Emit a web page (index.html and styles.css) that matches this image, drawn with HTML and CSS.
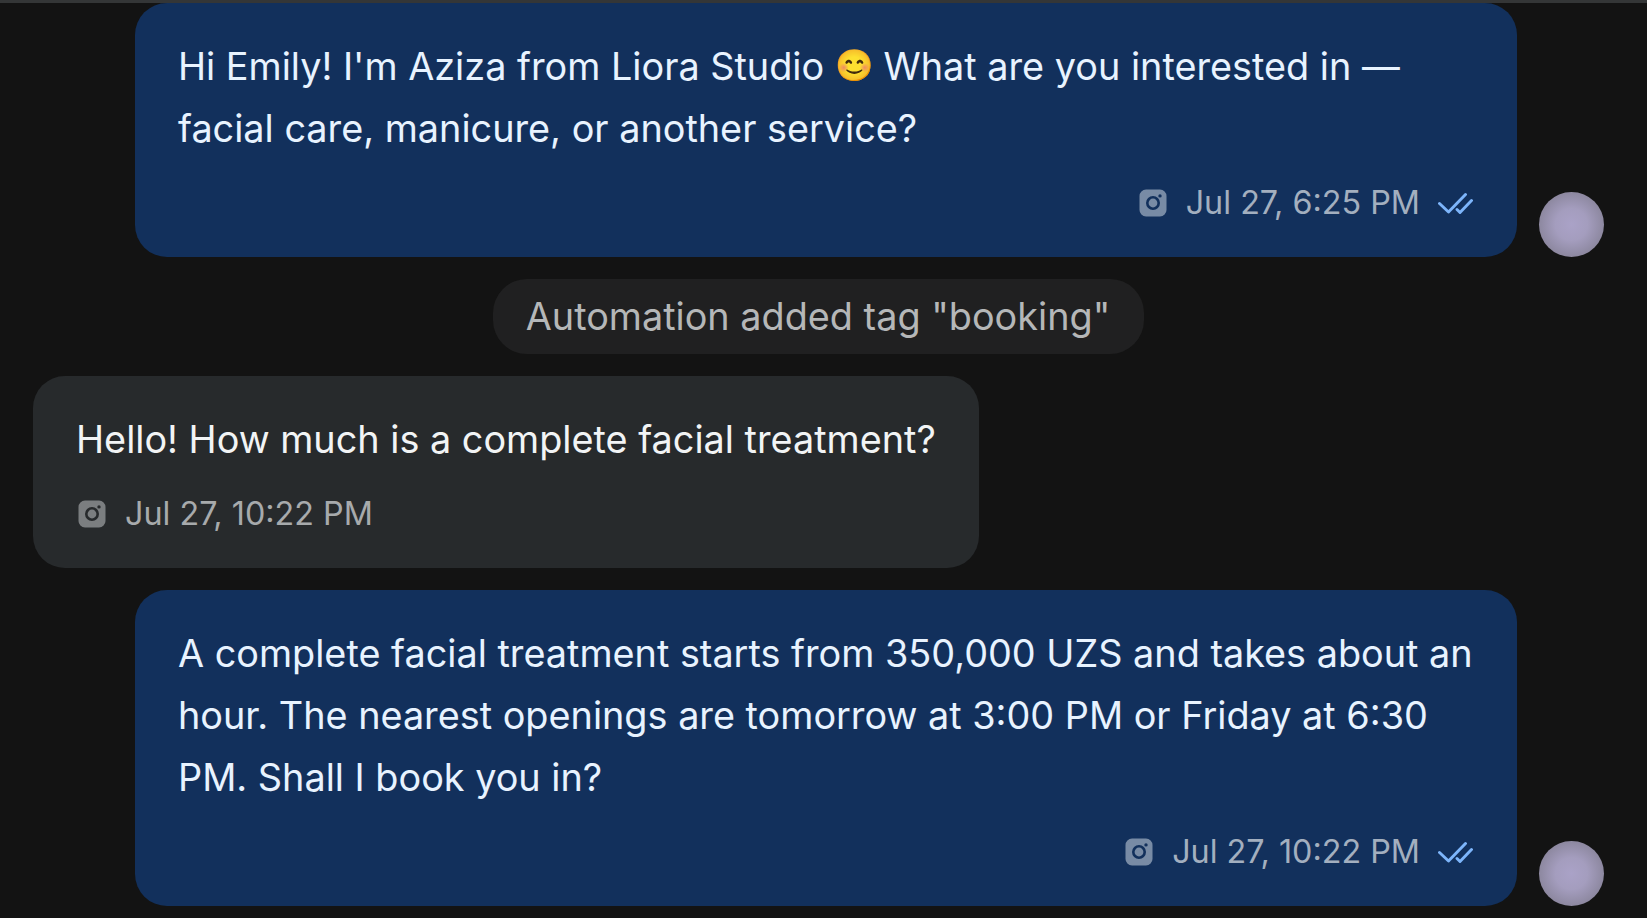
FILE: index.html
```html
<!DOCTYPE html>
<html lang="en">
<head>
    <meta charset="UTF-8">
    <meta name="viewport" content="width=device-width, initial-scale=1.0">
    <title>Liora Studio Chat</title>
    <link rel="stylesheet" href="styles.css">
</head>
<body>
    <!-- Shared icons -->
    <svg class="icon-defs" width="0" height="0">
        <symbol id="instagram" viewBox="0 0 28 28">
            <path fill="currentColor" fill-rule="evenodd" d="M7 .5h14A6.500 6.500 0 0 1 27.500 7v14a6.500 6.500 0 0 1-6.500 6.500H7A6.500 6.500 0 0 1 .5 21V7A6.500 6.500 0 0 1 7 .5ZM14 7a7 7 0 1 0 0 14 7 7 0 0 0 0-14ZM21 5.200a1.700 1.700 0 1 0 0 3.400 1.700 1.700 0 0 0 0-3.400Z"/>
            <circle cx="14" cy="14" r="4.400" fill="currentColor"/>
        </symbol>
        <symbol id="checks" viewBox="0 0 36 24">
            <path fill="none" stroke="currentColor" stroke-width="2.900" stroke-linecap="round" stroke-linejoin="round" d="M1.500 12.500 10.500 21 27.500 3.500M19 18.500 22 21.500 33.500 9.500"/>
        </symbol>
    </svg>

    <main class="chat">
        <div class="row outgoing">
            <div class="bubble">
                <p class="text">Hi Emily! I'm Aziza from Liora Studio <span class="emoji">😊</span> What are you interested in — facial care, manicure, or another service?</p>
                <div class="meta">
                    <svg class="source"><use href="#instagram"/></svg>
                    <span class="time">Jul 27, 6:25 PM</span>
                    <svg class="checks"><use href="#checks"/></svg>
                </div>
            </div>
            <div class="avatar"></div>
        </div>

        <div class="event">Automation added tag "booking"</div>

        <div class="row incoming">
            <div class="bubble">
                <p class="text">Hello! How much is a complete facial treatment?</p>
                <div class="meta">
                    <svg class="source"><use href="#instagram"/></svg>
                    <span class="time">Jul 27, 10:22 PM</span>
                </div>
            </div>
        </div>

        <div class="row outgoing">
            <div class="bubble">
                <p class="text">A complete facial treatment starts from 350,000 UZS and takes about an hour. The nearest openings are tomorrow at 3:00 PM or Friday at 6:30 PM. Shall I book you in?</p>
                <div class="meta">
                    <svg class="source"><use href="#instagram"/></svg>
                    <span class="time">Jul 27, 10:22 PM</span>
                    <svg class="checks"><use href="#checks"/></svg>
                </div>
            </div>
            <div class="avatar"></div>
        </div>
    </main>
</body>
</html>
```

FILE: styles.css
```css
* {
    box-sizing: border-box;
}

body {
    margin: 0;
    background-color: #131313;
    font-family: Inter, "Liberation Sans", sans-serif;
    overflow: hidden;
}

.icon-defs {
    position: absolute;
}

.chat {
    height: 918px;
    padding: 0 43px 0 33px;
    border-top: 3px solid #343637;
    display: flex;
    flex-direction: column;
    gap: 21.7px;
}

.row {
    display: flex;
    align-items: flex-end;
    gap: 22px;
}

.outgoing {
    justify-content: flex-end;
}

.bubble {
    padding: 32px 43px;
    border-radius: 32px;
}

.outgoing .bubble {
    width: 1382px;
    background-color: #12305c;
    color: #e8f3ff;
}

.incoming .bubble {
    width: 946px;
    background-color: #272a2c;
    color: #f2f4f5;
}

.text {
    margin: 0;
    font-size: 37.8px;
    line-height: 62.1px;
}

.emoji {
    display: inline-block;
    width: 38px;
    font-size: 31px;
    line-height: 38px;
    text-align: center;
    vertical-align: 4px;
}

.meta {
    height: 44px;
    margin-top: 22px;
    padding-bottom: 1px;
    display: flex;
    align-items: center;
    color: #a3afbf;
    font-size: 32.3px;
}

.outgoing .meta {
    justify-content: flex-end;
}

.incoming .meta {
    color: #a7aaac;
}

.source {
    width: 28px;
    height: 28px;
    margin: 0 19px 0 2px;
    color: #788ba5;
}

.incoming .source {
    color: #7b7e80;
}

.checks {
    width: 36px;
    height: 24px;
    margin-left: 18px;
    color: #7db5fb;
}

.event {
    align-self: center;
    width: 651px;
    height: 75.6px;
    margin-right: 1px;
    border-radius: 34px;
    background-color: #202021;
    color: #b5b7b8;
    font-size: 37.8px;
    line-height: 75px;
    text-align: center;
}

.avatar {
    width: 65px;
    height: 65px;
    border-radius: 50%;
    background: radial-gradient(circle, #aaa2c7 0%, #a49dbe 35%, #8d88a0 70%);
}
```
